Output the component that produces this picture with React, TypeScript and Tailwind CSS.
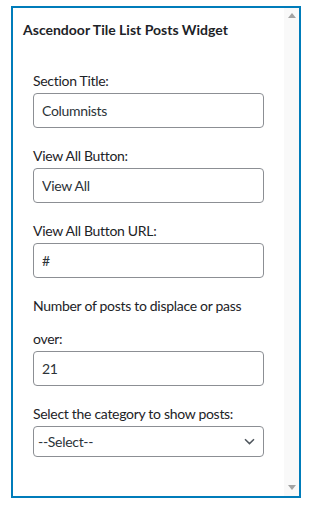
const font = { fontFamily: "Lato, 'Noto Sans', sans-serif" };

type Field = { label: string; value?: string; select?: boolean };

const fields: Field[] = [
  { label: "Section Title:", value: "Columnists" },
  { label: "View All Button:", value: "View All" },
  { label: "View All Button URL:", value: "#" },
  { label: "Number of posts to displace or pass over:", value: "21" },
  { label: "Select the category to show posts:", select: true },
];

function FieldRow({ field }: { field: Field }) {
  return (
    <div className="flex flex-col">
      <label className="block text-[14px] leading-[33px] tracking-[-0.3px] text-[#1d2327]">
        {field.label}
      </label>
      {field.select ? (
        <div className="-mt-[4px] flex h-[31px] items-center justify-between rounded-[4px] border border-[#8c8f94] bg-white pl-[4px] pr-[8px] text-[14px] tracking-[-0.3px] text-[#2c3338]">
          <span>--Select--</span>
          <svg width="11" height="7" viewBox="0 0 11 7" fill="none">
            <path d="M1 1.2 L5.5 5.6 L10 1.2" stroke="#50575e" strokeWidth="1.5" />
          </svg>
        </div>
      ) : (
        <input
          readOnly
          value={field.value}
          className="-mt-[4px] h-[35px] w-full rounded-[4px] border border-[#8c8f94] bg-white px-[8px] text-[14px] tracking-[-0.3px] text-[#2c3338] outline-none"
          style={font}
        />
      )}
    </div>
  );
}

export default function App() {
  return (
    <div className="h-[508px] w-[312px] bg-white pl-[11px] pt-[6px]" style={font}>
      <div className="flex h-[492px] w-[290px] border-2 border-[#007cba] bg-white">
        <div className="flex-1">
          <h3 className="ml-[10px] mt-[12px] text-[14px] font-bold leading-[20px] text-[#1d2327]">
            Ascendoor Tile List Posts Widget
          </h3>
          <div className="mt-[24px] flex flex-col gap-[11px] px-[20px]">
            {fields.map((field) => (
              <FieldRow key={field.label} field={field} />
            ))}
          </div>
        </div>
        <div className="flex w-[15px] flex-col items-center justify-between bg-[#f9f9f9] pb-[6px] pt-[5px]">
          <div className="h-0 w-0 border-x-[4px] border-b-[5px] border-x-transparent border-b-[#a3a3a3]" />
          <div className="h-0 w-0 border-x-[4px] border-t-[5px] border-x-transparent border-t-[#a3a3a3]" />
        </div>
      </div>
    </div>
  );
}
